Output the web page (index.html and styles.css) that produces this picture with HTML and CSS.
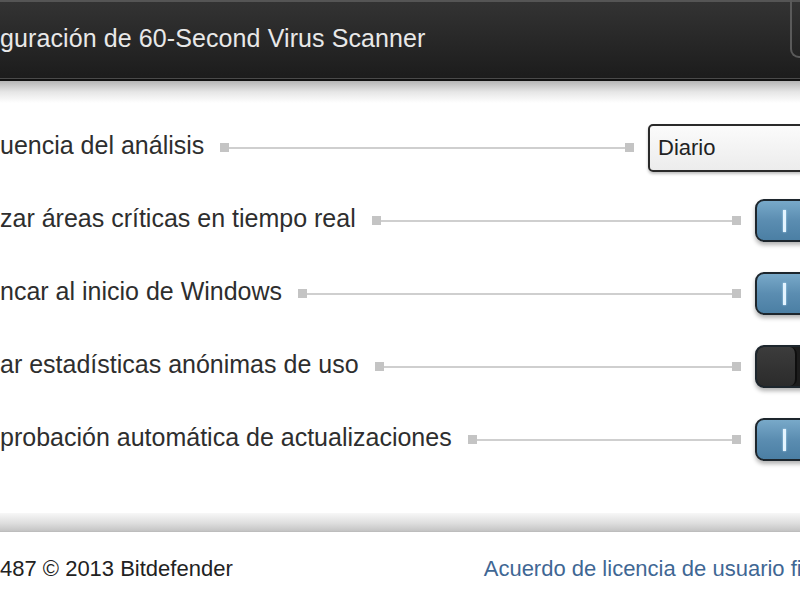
FILE: index.html
```html
<!DOCTYPE html>
<html lang="es">

<head>
    <meta charset="UTF-8">
    <meta name="viewport" content="width=device-width, initial-scale=1.0">
    <title>Configuración de 60-Second Virus Scanner</title>
    <link rel="stylesheet" href="styles.css">
</head>

<body>
    <div class="window">
        <div class="titlebar">
            <span class="title">guración de 60-Second Virus Scanner</span>
            <div class="close-btn"></div>
        </div>
        <div class="shade"></div>

        <div class="settings">
            <div class="row">
                <span class="label">uencia del análisis</span>
                <div class="connector"><i></i><b></b><i></i></div>
                <div class="select">Diario</div>
            </div>
            <div class="row">
                <span class="label">zar áreas críticas en tiempo real</span>
                <div class="connector"><i></i><b></b><i></i></div>
                <div class="toggle on"><span class="mark"></span></div>
            </div>
            <div class="row">
                <span class="label">ncar al inicio de Windows</span>
                <div class="connector"><i></i><b></b><i></i></div>
                <div class="toggle on"><span class="mark"></span></div>
            </div>
            <div class="row">
                <span class="label">ar estadísticas anónimas de uso</span>
                <div class="connector"><i></i><b></b><i></i></div>
                <div class="toggle off"><span class="knob"></span></div>
            </div>
            <div class="row">
                <span class="label">probación automática de actualizaciones</span>
                <div class="connector"><i></i><b></b><i></i></div>
                <div class="toggle on"><span class="mark"></span></div>
            </div>
        </div>

        <div class="footer-bar"></div>
        <div class="footer">
            <span class="copy">487 © 2013 Bitdefender</span>
            <a class="eula" href="#">Acuerdo de licencia de usuario final</a>
        </div>
    </div>
</body>

</html>
```

FILE: styles.css
```css
html,
body {
    padding: 0;
    margin: 0;
    overflow: hidden;
    background: #fff;
}

.window {
    width: 870px;
    height: 600px;
    display: flex;
    flex-direction: column;
    font-family: "Liberation Sans", Arial, sans-serif;
}

.titlebar {
    position: relative;
    height: 76px;
    flex: none;
    background: linear-gradient(#333 0%, #2a2a2a 40%, #1c1c1c 100%);
    border-top: 2px solid #555;
    border-bottom: 1px solid #4a4a4a;
    box-shadow: 0 2px 0 #111;
    display: flex;
    align-items: center;
}

.title {
    color: #e8e8e8;
    font-size: 25px;
    letter-spacing: 0.1px;
    margin-top: -4px;
}

.close-btn {
    position: absolute;
    left: 790px;
    top: -4px;
    width: 60px;
    height: 58px;
    border: 2px solid #5a5a5a;
    border-top: none;
    border-radius: 0 0 0 9px;
}

.shade {
    height: 22px;
    flex: none;
    margin-top: 2px;
    background: linear-gradient(#b5b5b5, #e6e6e6 50%, #fff);
}

.settings {
    padding-top: 8px;
    flex: none;
}

.row {
    height: 73px;
    display: flex;
    align-items: center;
}

.label {
    font-size: 25px;
    color: #2e2e2e;
    margin-top: -4px;
    white-space: nowrap;
}

.connector {
    flex: 1;
    display: flex;
    align-items: center;
    margin: 0 14px 0 16px;
}

.connector i {
    width: 9px;
    height: 9px;
    background: #c4c4c4;
}

.connector b {
    flex: 1;
    height: 2px;
    background: #cfcfcf;
}

.select {
    width: 210px;
    height: 44px;
    border: 2px solid #2a2a2a;
    border-radius: 5px;
    background: linear-gradient(#fbfbfb, #ececec);
    box-shadow: 0 2px 3px rgba(0, 0, 0, 0.25);
    font-size: 22px;
    color: #222;
    line-height: 44px;
    padding-left: 8px;
}

.toggle {
    width: 111px;
    height: 39px;
    border: 2px solid #1d262d;
    border-radius: 9px;
    box-shadow: 0 3px 4px rgba(0, 0, 0, 0.3);
    position: relative;
    overflow: hidden;
}

.toggle.on {
    background: linear-gradient(#78a9c9, #5b8db1 50%, #4b7fa4);
}

.toggle .mark {
    position: absolute;
    left: 26px;
    top: 9px;
    width: 3px;
    height: 22px;
    background: #e4f4ff;
    box-shadow: 0 0 2px #bfe6ff;
}

.toggle.off {
    background: #1c1c1c;
}

.toggle .knob {
    position: absolute;
    left: 0;
    top: 0;
    width: 38px;
    height: 39px;
    background: linear-gradient(#3c3c3c, #2b2b2b);
    border-right: 2px solid #0e0e0e;
    border-radius: 7px;
}

.footer-bar {
    height: 18px;
    flex: none;
    margin-top: 37px;
    background: linear-gradient(#f7f7f7, #dcdcdc 60%, #c4c4c4);
    border-bottom: 1px solid #bdbdbd;
}

.footer {
    flex: 1;
    display: flex;
    align-items: center;
    padding-top: 6px;
    white-space: nowrap;
}

.copy {
    font-size: 22px;
    color: #222;
}

.eula {
    margin-left: 251px;
    font-size: 22px;
    color: #3f6794;
    text-decoration: none;
}
```
